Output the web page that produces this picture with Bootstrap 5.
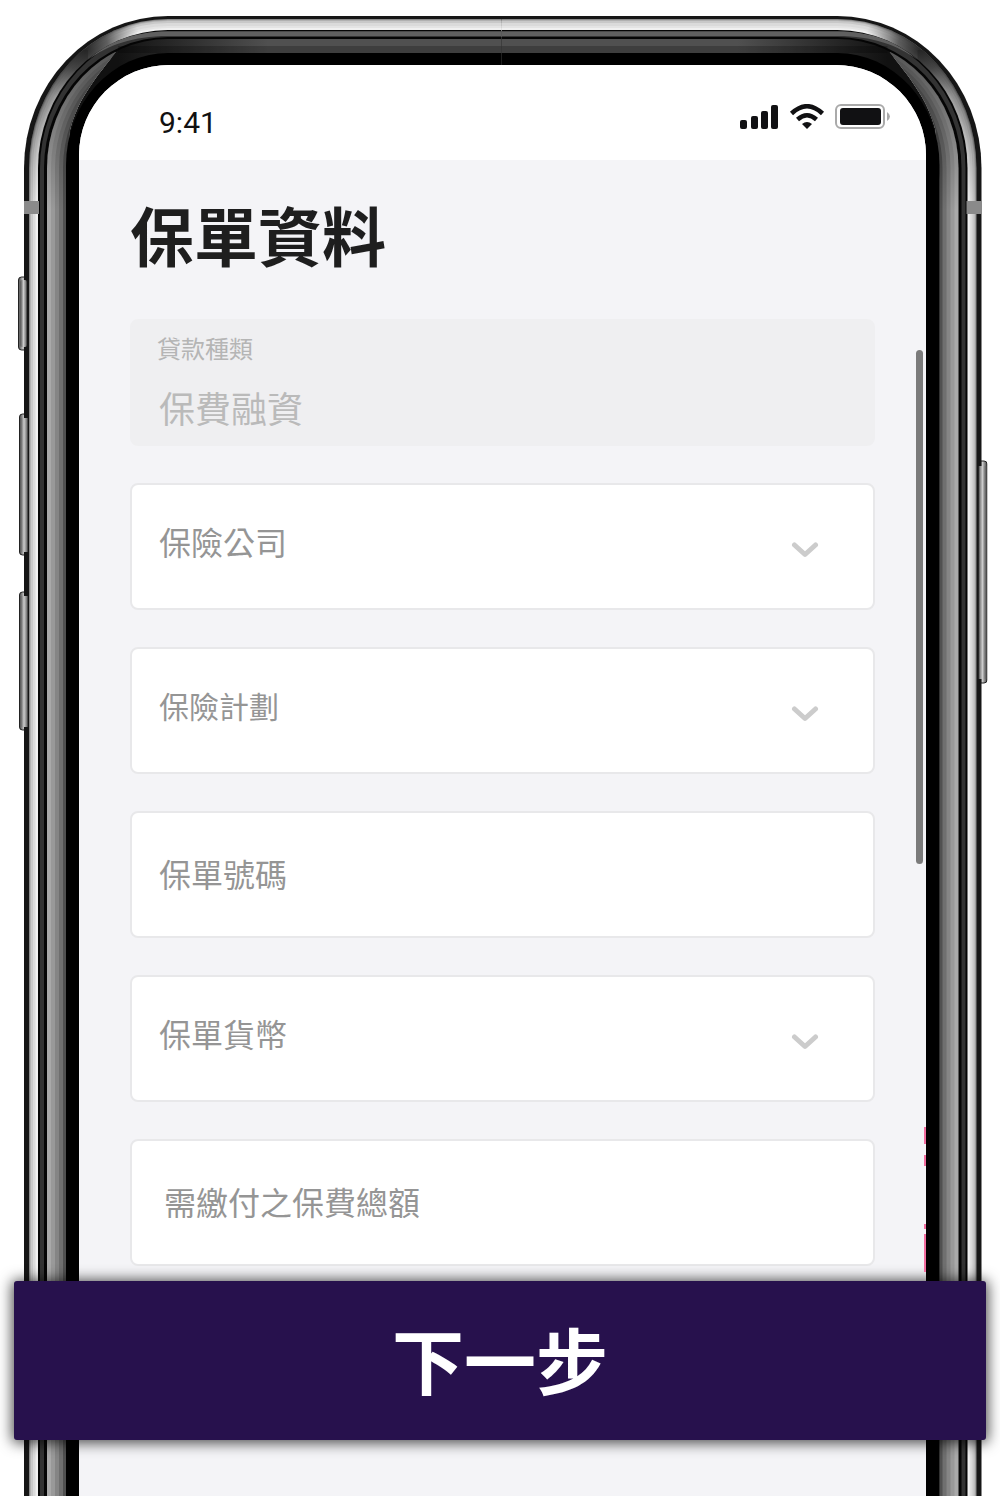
<!DOCTYPE html>
<html lang="zh-Hant">
<head>
<meta charset="utf-8">
<meta name="viewport" content="width=device-width, initial-scale=1">
<title>保單資料</title>
<link rel="stylesheet" href="https://cdn.jsdelivr.net/npm/bootstrap@5.3.0/dist/css/bootstrap.min.css">
<style>
  body { background: #fff; font-family: "Noto Sans CJK TC", "Noto Sans", sans-serif; }
  .phone { margin: 0 13px 0 18px; padding: 65px 61px 0; min-height: 100vh; }
  .shell { top: 0; width: calc(50% + 1px); height: 100%; overflow: hidden; pointer-events: none; }
  .shell-left { left: 0; }
  .shell-right { right: 0; transform: scaleX(-1); }
  .screen { background: #f4f4f7; border-radius: 90px 90px 0 0; min-height: calc(100vh - 65px); }
  .status { height: 95px; padding: 8px 35px 0 80px; background: #fff; border-radius: 90px 90px 0 0; }
  .clock { font: 400 30px/40px Roboto, sans-serif; color: #111; padding-top: 12px; }
  .policy { padding: 33px 51px 56px; }
  .policy h1 { font-size: 64px; line-height: 80px; font-weight: 700; color: #1e1e1e; margin-bottom: 46px; }
  .fields { display: grid; gap: 37px; }
  .box { height: 127px; border: 2px solid #e8e8ea; border-radius: 8px; background: #fff; }
  .box .form-control, .box .form-select {
    height: 100%; padding: 0 27px 4px; border: 0; border-radius: 8px; background: transparent;
    font-size: 32px; line-height: 48px; color: #959595;
  }
  .box .form-select { padding-bottom: 12px; }
  .box .form-control::placeholder { color: #959595; opacity: 1; }
  .box .plan-select { font-size: 30px; }
  .box .wide-pad { padding-left: 32px; }
  .locked { background: #efeff1; border-color: #efeff1; padding: 9px 0 0 25px; }
  .locked label { font-size: 24px; line-height: 36px; color: #b5b5b5; }
  .locked .form-control { height: 56px; padding: 0 2px; margin-top: 13px; font-size: 36px; line-height: 56px; color: #bababa; }
  .locked .form-control:disabled { background: transparent; }
  .chevron { right: 54px; top: 56px; pointer-events: none; }
  .next { margin: 15px -111px 0 -116px; height: 159px; padding: 0 0 6px; border: 0; border-radius: 3px; background: #27114d; color: #fff;
    font-size: 72px; line-height: 100px; font-weight: 700; box-shadow: 0 1px 14px 2px rgba(0,0,0,.7); }
  .thumb { top: 285px; right: 3px; width: 7px; height: 514px; background: #7b7b7b; }
</style>
<script src="https://cdn.jsdelivr.net/npm/bootstrap@5.3.0/dist/js/bootstrap.bundle.min.js"></script>
</head>
<body>
<main class="phone position-relative">
  <svg class="shell shell-left position-absolute" aria-hidden="true">
    <defs>
      <linearGradient id="topBand" gradientUnits="userSpaceOnUse" x1="100" y1="0" x2="250" y2="0"><stop offset="0" stop-color="#111"/><stop offset="1" stop-color="#505050"/></linearGradient>
      <linearGradient id="fade" gradientUnits="userSpaceOnUse" x1="0" y1="50" x2="0" y2="210"><stop offset="0" stop-color="#000" stop-opacity=".5"/><stop offset="1" stop-color="#000" stop-opacity="0"/></linearGradient>
      <radialGradient id="shade" gradientUnits="userSpaceOnUse" cx="68" cy="50" r="56"><stop offset="0" stop-color="#222" stop-opacity=".95"/><stop offset=".4" stop-color="#333" stop-opacity=".75"/><stop offset="1" stop-color="#555" stop-opacity="0"/></radialGradient>
      <linearGradient id="key" x1="0" y1="0" x2="1" y2="0"><stop offset="0" stop-color="#555"/><stop offset=".2" stop-color="#777"/><stop offset=".5" stop-color="#ccc"/><stop offset=".8" stop-color="#888"/><stop offset="1" stop-color="#333"/></linearGradient>
      <clipPath id="wedge"><path d="M0 4000V140C12 95 50 60 98 52C80 75 60 98 52 130L48 180V4000Z"/></clipPath>
      <clipPath id="rimArea"><rect x="11" y="19" width="3000" height="5000" rx="139" ry="149"/></clipPath>
      <g id="bezel">
        <rect x="6" y="16" width="3000" height="5000" rx="144" ry="152" fill="#161616"/>
        <rect x="11" y="19" width="3000" height="5000" rx="139" ry="149" fill="#8a8a8a"/>
        <rect x="12" y="20" width="3000" height="5000" rx="138" ry="148" fill="#b0b0b0"/>
        <rect x="13" y="21" width="3000" height="5000" rx="137" ry="147" fill="#c8c8c8"/>
        <rect x="15" y="23" width="3000" height="5000" rx="135" ry="145" fill="#dadada"/>
        <rect x="17" y="26" width="3000" height="5000" rx="133" ry="142" fill="#e4e4e4"/>
        <rect x="18" y="28" width="3000" height="5000" rx="132" ry="140" fill="#f0f0f0"/>
        <g clip-path="url(#rimArea)">
          <rect x="0" y="50" width="70" height="170" fill="url(#fade)"/>
          <rect x="0" y="0" width="130" height="130" fill="url(#shade)"/>
        </g>
        <rect x="20" y="30" width="3000" height="5000" rx="130" ry="138" fill="#050505"/>
        <rect x="22" y="31" width="3000" height="5000" rx="128" ry="137" fill="#333"/>
        <path d="M150 31.500H3000V36H150C115 36 90 45 70 60C90 42 115 31.500 150 31.500" fill="#606060"/>
        <rect x="26" y="37" width="3000" height="5000" rx="124" ry="131" fill="#050505"/>
        <rect x="29" y="39" width="3000" height="5000" rx="121" ry="129" fill="url(#topBand)"/>
        <path d="M100 46H3000V53H100Z" fill="#000" opacity=".22"/>
        <g clip-path="url(#wedge)">
          <rect x="29" y="39" width="3000" height="5000" rx="121" ry="129" fill="#a9a9a9"/>
          <rect x="33" y="42" width="3000" height="5000" rx="117" ry="126" fill="#999"/>
          <rect x="37" y="45" width="3000" height="5000" rx="113" ry="123" fill="#858585"/>
          <rect x="41" y="48" width="3000" height="5000" rx="109" ry="120" fill="#6f6f6f"/>
          <rect x="45" y="51" width="3000" height="5000" rx="105" ry="117" fill="#505050"/>
          <path d="M29 210V170A121 129 0 0 1 130 40V210Z" fill="url(#fade)"/>
        </g>
        <rect x="48" y="53" width="3000" height="5000" rx="102" ry="112" fill="#000"/>
        <rect x="6" y="201" width="15" height="13" fill="#8a8a8a"/>
      </g>
    </defs>
    <g stroke="#222" stroke-width="1" fill="url(#key)">
      <rect x="0.500" y="277" width="9" height="73" rx="3"/>
      <rect x="1.500" y="414" width="9" height="141" rx="3"/>
      <rect x="1.500" y="592" width="9" height="138" rx="3"/>
    </g>
    <use href="#bezel"/>
    <g fill="url(#key)"><rect x="2" y="280" width="7" height="67" rx="2"/><rect x="2" y="418" width="8" height="134"/><rect x="2" y="596" width="8" height="131"/></g>
  </svg>
  <svg class="shell shell-right position-absolute" aria-hidden="true">
    <rect x="0.500" y="461" width="9" height="222" rx="3" fill="url(#key)" stroke="#222"/>
    <use href="#bezel"/>
    <rect x="1" y="466" width="8" height="213" fill="url(#key)"/>
  </svg>

  <div class="screen position-relative">
    <header class="status d-flex justify-content-between align-items-center">
      <span class="clock">9:41</span>
      <svg width="151" height="26" viewBox="0 0 151 26" aria-hidden="true">
        <g fill="#111113"><rect y="16" width="7" height="9" rx="2"/><rect x="11" y="12" width="7" height="13" rx="2"/><rect x="21" y="7" width="7" height="18" rx="2"/><rect x="31" y="1" width="7" height="24" rx="2"/></g>
        <g fill="none" stroke="#111113" stroke-width="4.500"><path d="M51.500 9.500Q67 -5 82.500 9.500"/><path d="M57.500 15.500Q67 7 76.500 15.500"/></g>
        <path d="M62 20Q67 16 72 20L67 25Z" fill="#111113"/>
        <rect x="96" y="1" width="48" height="23" rx="5" fill="#fff" stroke="#aaa" stroke-width="2"/>
        <rect x="100" y="4" width="41" height="17" rx="3" fill="#111113"/><path d="M147 8Q150 10 150 12.500T147 17Z" fill="#aaa"/>
      </svg>
    </header>
    <form class="policy">
      <h1>保單資料</h1>
      <div class="fields">
        <div class="box locked">
          <label class="d-block" for="loan">貸款種類</label>
          <input class="form-control" id="loan" value="保費融資" disabled>
        </div>
        <div class="box position-relative">
          <select class="form-select" aria-label="保險公司"><option>保險公司</option></select>
          <svg class="chevron position-absolute" width="28" height="20" aria-hidden="true"><path d="M3.500 4L14 13.500L24.500 4" fill="none" stroke="#ccc" stroke-width="5" stroke-linecap="round" stroke-linejoin="round"/></svg>
        </div>
        <div class="box position-relative">
          <select class="form-select plan-select" aria-label="保險計劃"><option>保險計劃</option></select>
          <svg class="chevron position-absolute" width="28" height="20" aria-hidden="true"><path d="M3.500 4L14 13.500L24.500 4" fill="none" stroke="#ccc" stroke-width="5" stroke-linecap="round" stroke-linejoin="round"/></svg>
        </div>
        <div class="box"><input class="form-control" type="text" aria-label="保單號碼" placeholder="保單號碼"></div>
        <div class="box position-relative">
          <select class="form-select" aria-label="保單貨幣"><option>保單貨幣</option></select>
          <svg class="chevron position-absolute" width="28" height="20" aria-hidden="true"><path d="M3.500 4L14 13.500L24.500 4" fill="none" stroke="#ccc" stroke-width="5" stroke-linecap="round" stroke-linejoin="round"/></svg>
        </div>
        <div class="box"><input class="form-control wide-pad" type="text" aria-label="需繳付之保費總額" placeholder="需繳付之保費總額"></div>
      </div>
      <div class="d-grid"><button class="next position-relative" type="button">下一步</button></div>
    </form>
    <div class="thumb position-absolute rounded-pill"></div>
    <svg class="position-absolute top-0 end-0" width="2" height="1431" aria-hidden="true"><g fill="#f26d9f"><rect y="1062" width="2" height="17"/><rect y="1090" width="2" height="11"/><rect y="1159" width="2" height="5"/><rect y="1169" width="2" height="38"/></g></svg>
  </div>
</main>
</body>
</html>
